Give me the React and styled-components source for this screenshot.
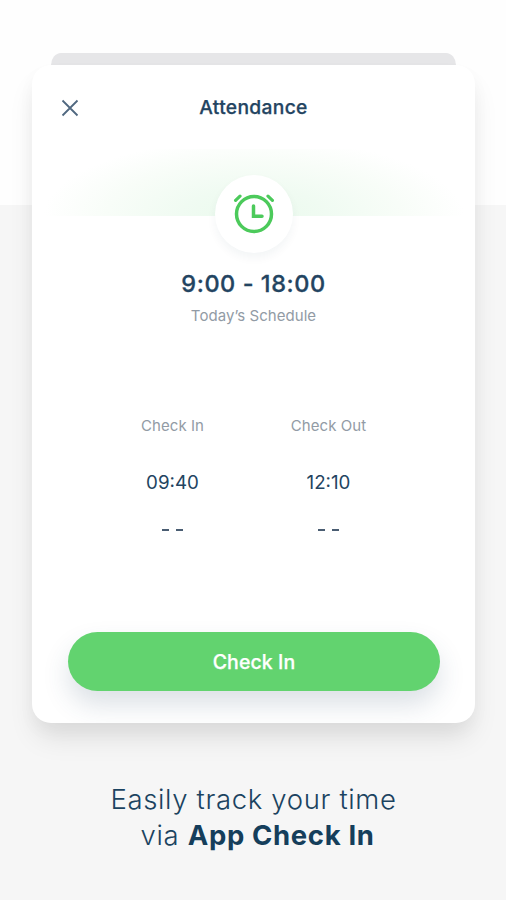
import React from "react";
import styled, { createGlobalStyle } from "styled-components";

const GlobalStyle = createGlobalStyle`
  * { box-sizing: border-box; }
  body { margin: 0; background: #f6f6f6; }
`;

const Page = styled.main`
  width: 506px;
  height: 900px;
  padding: 53px 31px 0 32px;
  overflow: hidden;
  background: linear-gradient(#fefefe 0 205px, #f6f6f6 205px);
  font-family: Inter, sans-serif;
  color: #234461;
`;

const BackSheet = styled.div`
  height: 12px;
  margin: 0 19px;
  background: #e6e6e8;
  border-radius: 10px 10px 0 0 / 12px 12px 0 0;
`;

const Card = styled.section`
  display: flex;
  flex-direction: column;
  height: 658px;
  overflow: hidden;
  background: #fff;
  border-radius: 19px;
  box-shadow: 0 18px 28px -4px rgba(0, 0, 0, 0.1), 0 8px 18px rgba(0, 0, 0, 0.03);
`;

const Header = styled.header`
  display: grid;
  grid-template-columns: 60px 1fr 60px;
  align-items: center;
  height: 84px;
  padding: 0 15px;
`;

const CloseButton = styled.button`
  display: flex;
  width: 18px;
  margin-left: 14px;
  padding: 2px 0 0;
  border: 0;
  background: none;
`;

const Title = styled.h1`
  margin: 0;
  text-align: center;
  white-space: nowrap;
  font-size: 19.25px;
  line-height: 24px;
  font-weight: 500;
  letter-spacing: 0.3px;
  -webkit-text-stroke: 0.25px currentColor;
`;

const Hero = styled.div`
  display: flex;
  justify-content: center;
  height: 104px;
  padding-top: 26px;
  background: radial-gradient(ellipse 210px 78px at 222px 75px, #eafaed 0%, #f0fbf2 35%, #f8fdf8 70%, #fff 100%) 0 -8px / 100% 75px no-repeat;
`;

const ClockDisc = styled.div`
  display: flex;
  align-items: center;
  justify-content: center;
  width: 78px;
  height: 78px;
  border-radius: 50%;
  background: #fff;
  box-shadow: 0 5px 10px rgba(25, 50, 70, 0.05);
`;

const Schedule = styled.div`
  display: flex;
  flex-direction: column;
  align-items: center;
  gap: 7px;
  padding-top: 16px;
`;

const Hours = styled.div`
  font-size: 23.5px;
  line-height: 30px;
  font-weight: 500;
  letter-spacing: 0.55px;
  -webkit-text-stroke: 0.3px currentColor;
`;

const Label = styled.div`
  font-size: 15px;
  line-height: 20px;
  letter-spacing: 0.05px;
  color: #929ba5;
`;

const Columns = styled.div`
  display: grid;
  grid-template-columns: 156px 156px;
  justify-content: center;
  margin-top: 90px;
  margin-right: 6px;
`;

const Column = styled.div`
  display: flex;
  flex-direction: column;
  align-items: center;
`;

const Time = styled.div`
  margin-top: 35px;
  font-size: 18.75px;
  line-height: 24px;
`;

const Empty = styled.div`
  display: flex;
  gap: 7px;
  margin-top: 34px;
`;

const Dash = styled.span`
  width: 7px;
  height: 2px;
  background: #4a5d72;
`;

const CheckInButton = styled.button`
  flex: none;
  height: 59px;
  margin: auto 35px 32px 36px;
  padding: 0;
  border: 0;
  border-radius: 30px;
  background: #62d36f;
  color: #fff;
  font: 500 19.5px/24px Inter, sans-serif;
  letter-spacing: 0.1px;
  -webkit-text-stroke: 0.25px currentColor;
  box-shadow: 0 14px 26px rgba(50, 80, 105, 0.17);
`;

const Caption = styled.p`
  margin: 58px 0 0;
  text-align: center;
  font: 300 27.5px/36px Inter, sans-serif;
  color: #1b4360;
`;

const CaptionLine = styled.span`
  display: block;
  white-space: nowrap;
  letter-spacing: ${({ $spacing }) => $spacing};
  margin-left: ${({ $shift }) => $shift || "0"};
`;

const Strong = styled.strong`
  font-weight: 700;
  letter-spacing: 0.65px;
  color: #153e5b;
`;

const CloseIcon = () => (
  <svg width="18" height="18" viewBox="0 0 18 18" fill="none" stroke="#506880" strokeWidth="1.8">
    <path d="M1.5 1.5l15 15M16.5 1.5l-15 15" />
  </svg>
);

const AlarmIcon = () => (
  <svg width="44" height="44" viewBox="0 0 44 44" fill="none" stroke="#4cca5b" strokeWidth="3.5">
    <circle cx="22" cy="22" r="17.5" />
    <path d="M21.5 14v10.3h8.5" strokeLinecap="round" />
    <path d="M3.6 8.4l4.4-4.2M40.4 8.4l-4.4-4.2" strokeWidth="3.2" strokeLinecap="round" />
  </svg>
);

const entries = [
  { label: "Check In", time: "09:40" },
  { label: "Check Out", time: "12:10" },
];

export default function App() {
  return (
    <Page>
      <GlobalStyle />
      <BackSheet />
      <Card>
        <Header>
          <CloseButton aria-label="Close"><CloseIcon /></CloseButton>
          <Title>Attendance</Title>
        </Header>
        <Hero>
          <ClockDisc><AlarmIcon /></ClockDisc>
        </Hero>
        <Schedule>
          <Hours>9:00 - 18:00</Hours>
          <Label>Today’s Schedule</Label>
        </Schedule>
        <Columns>
          {entries.map(({ label, time }) => (
            <Column key={label}>
              <Label>{label}</Label>
              <Time>{time}</Time>
              <Empty><Dash /><Dash /></Empty>
            </Column>
          ))}
        </Columns>
        <CheckInButton>Check In</CheckInButton>
      </Card>
      <Caption>
        <CaptionLine $spacing="0.65px">Easily track your time</CaptionLine>
        <CaptionLine $spacing="0.7px" $shift="8px">via <Strong>App Check In</Strong></CaptionLine>
      </Caption>
    </Page>
  );
}
